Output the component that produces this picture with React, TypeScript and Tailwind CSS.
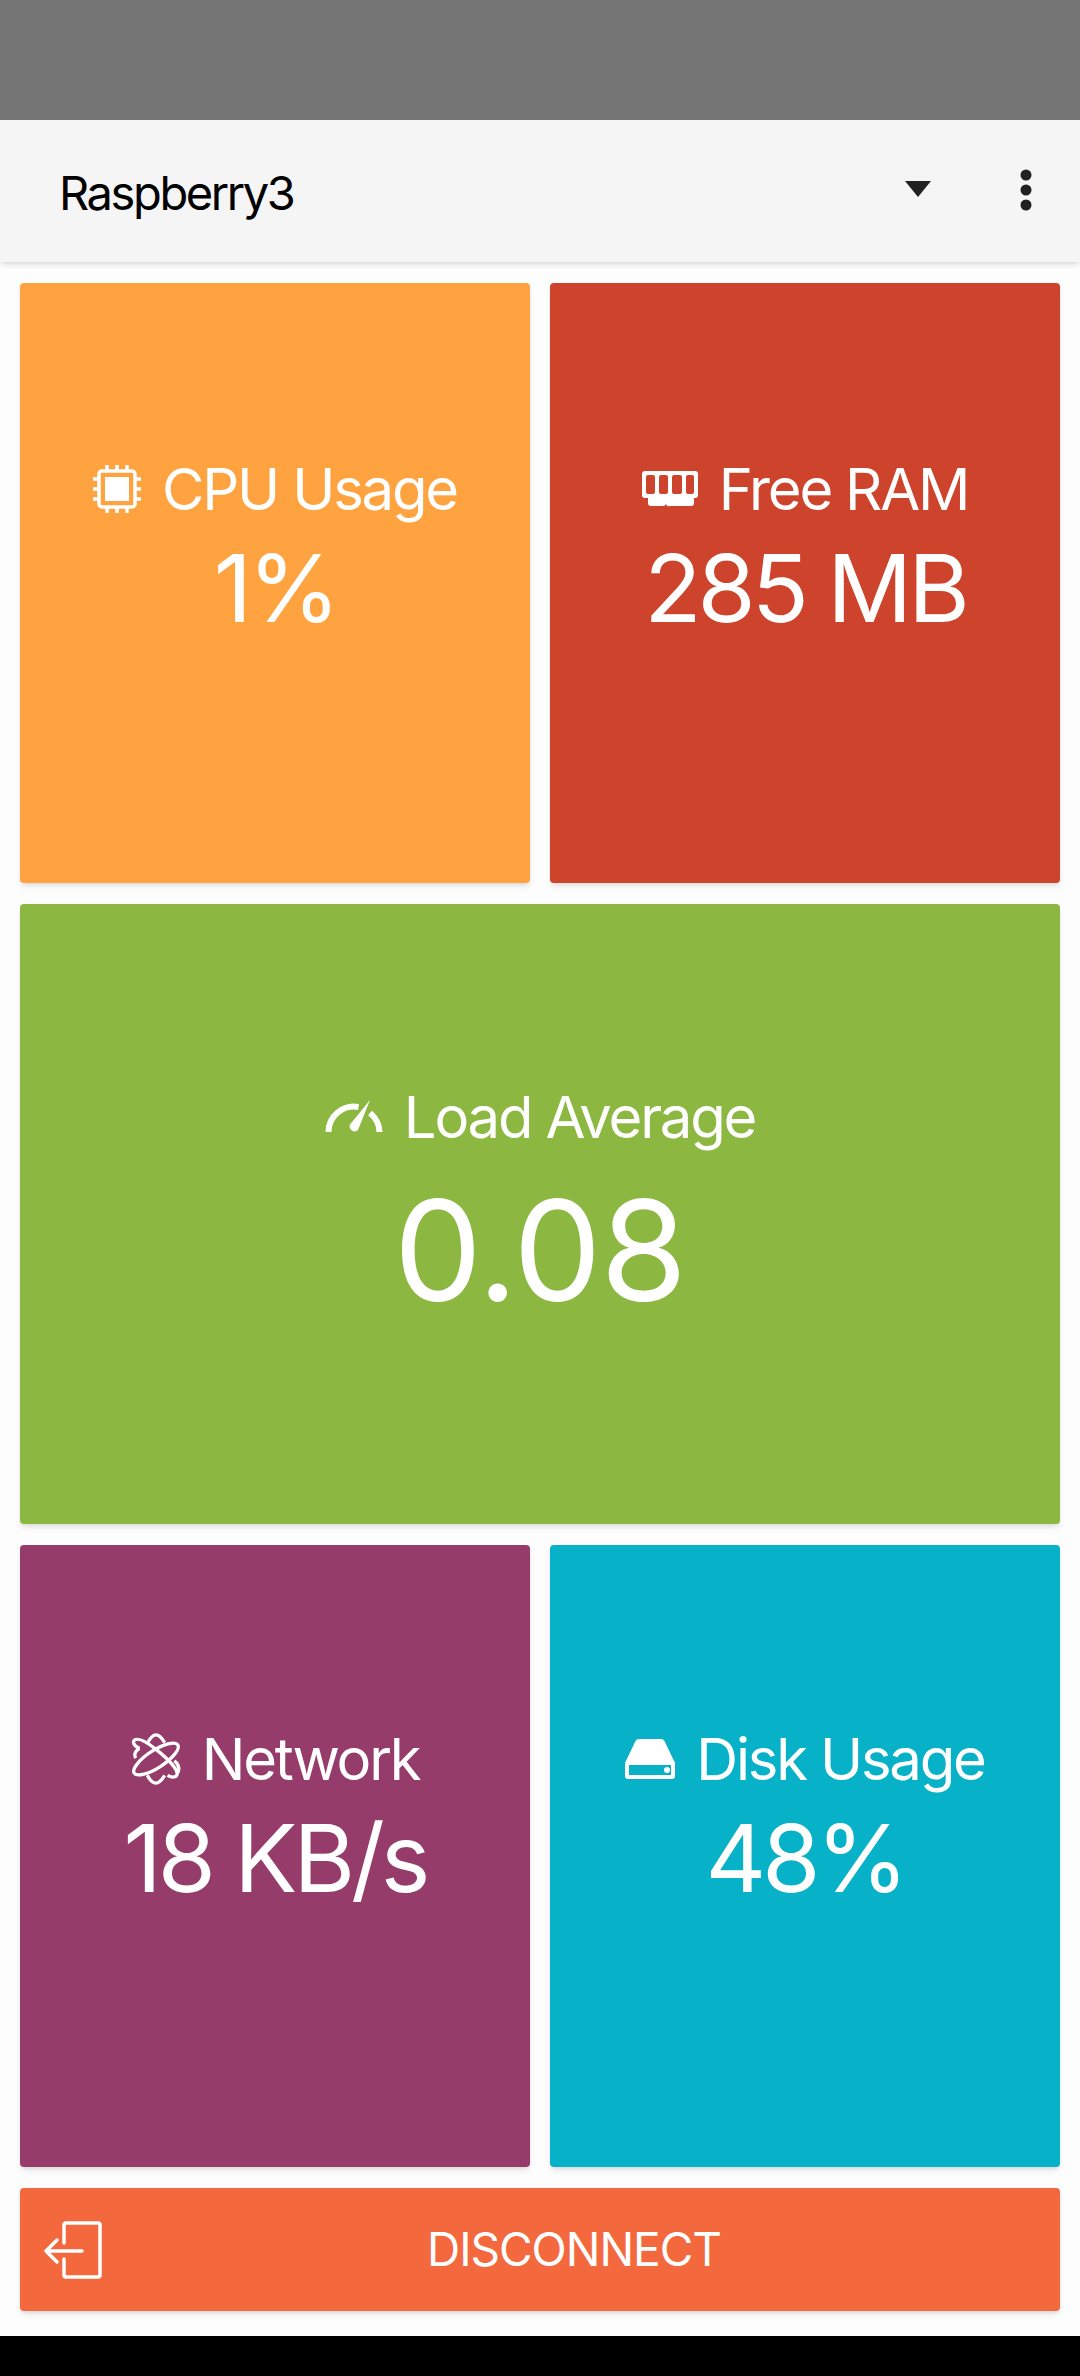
import type { ReactNode } from "react";

function CpuIcon() {
  return (
    <svg viewBox="0 0 48 48" className="w-[48px] h-[48px]" fill="none" stroke="#fff">
      <rect x="6" y="6" width="36" height="36" rx="3" strokeWidth="3.5" />
      <rect x="12" y="12" width="24" height="24" fill="#fff" stroke="none" />
      <path d="M14 0v5M24 0v5M34 0v5M14 43v5M24 43v5M34 43v5M0 14h5M0 24h5M0 34h5M43 14h5M43 24h5M43 34h5" strokeWidth="3.5" />
    </svg>
  );
}

function RamIcon() {
  return (
    <svg viewBox="0 0 56 36" className="w-[56px] h-[36px]" fill="#fff">
      <path
        fillRule="evenodd"
        d="M3 0h50a3 3 0 0 1 3 3v20a3 3 0 0 1-3 4h-1v5a3 3 0 0 1-3 3H28a3 3 0 0 1-4-2 3 3 0 0 1-3 2H9a3 3 0 0 1-3-3v-5H3a3 3 0 0 1-3-4V3a3 3 0 0 1 3-3zM4 6v15a2 2 0 0 0 2 2h5a2 2 0 0 0 2-2V6a2 2 0 0 0-2-2H6a2 2 0 0 0-2 2zm13 0v15a2 2 0 0 0 2 2h5a2 2 0 0 0 2-2V6a2 2 0 0 0-2-2h-5a2 2 0 0 0-2 2zm13 0v15a2 2 0 0 0 2 2h6a2 2 0 0 0 2-2V6a2 2 0 0 0-2-2h-6a2 2 0 0 0-2 2zm14 0v15a2 2 0 0 0 2 2h4a2 2 0 0 0 2-2V6a2 2 0 0 0-2-2h-4a2 2 0 0 0-2 2z"
      />
    </svg>
  );
}

function GaugeIcon() {
  return (
    <svg viewBox="0 0 58 34" className="w-[58px] h-[34px]" fill="none" stroke="#fff">
      <path d="M3.500 32a25.500 25.500 0 0 1 30-25" strokeWidth="6" />
      <path d="M45 13a25.500 25.500 0 0 1 9.500 19" strokeWidth="6" />
      <path d="M45 0 33 30a5 5 0 0 1-8-5.500z" fill="#fff" stroke="none" />
    </svg>
  );
}

function AtomIcon() {
  return (
    <svg viewBox="0 0 52 54" className="w-[50px] h-[52px]" fill="none" stroke="#fff" strokeWidth="3.400">
      <ellipse cx="26" cy="27" rx="27" ry="9" transform="rotate(-33 26 27)" />
      <path d="M9 16C3 14 1 9 4 7c4-2 12 2 22 10s21 18 22 25c0 4-5 5-10 2" />
      <path d="M9 16c-5 2-6 7-4 10M48 42c3-3 2-10-3-13" />
      <path d="M17 11c3-6 6-9 9-9s6 3 9 8" />
      <path d="M17 44c3 6 6 8 9 8s6-3 9-8" />
    </svg>
  );
}

function DiskIcon() {
  return (
    <svg viewBox="0 0 50 40" className="w-[50px] h-[40px]" fill="#fff">
      <path d="M14 0h22a4 4 0 0 1 3.500 2L50 24H0L10.500 2A4 4 0 0 1 14 0z" />
      <path
        fillRule="evenodd"
        d="M3 22h44a3 3 0 0 1 3 3v12a3 3 0 0 1-3 3H3a3 3 0 0 1-3-3V25a3 3 0 0 1 3-3zm1 4v10h42V26zm35 5a3 3 0 1 0 6 0 3 3 0 0 0-6 0z"
      />
    </svg>
  );
}

function ExitIcon() {
  return (
    <svg viewBox="0 0 58 58" className="w-[58px] h-[58px]" fill="none" stroke="#fff" strokeWidth="3.500" strokeLinecap="round" strokeLinejoin="round">
      <path d="M20 22V4a2 2 0 0 1 2-2h32a2 2 0 0 1 2 2v50a2 2 0 0 1-2 2H22a2 2 0 0 1-2-2V38" />
      <path d="M38 30H2M13 19 2 30l11 11" />
    </svg>
  );
}

function Tile({
  color,
  icon,
  title,
  value,
  valueClass,
}: {
  color: string;
  icon: ReactNode;
  title: string;
  value: string;
  valueClass: string;
}) {
  return (
    <div className={`flex-1 min-w-0 h-full rounded-[4px] shadow-md flex flex-col items-center justify-center text-white ${color}`}>
      <div className="flex items-center gap-[21px]">
        {icon}
        <span className="text-[58px] leading-[64px] tracking-[-2.200px]">{title}</span>
      </div>
      <span className={valueClass}>{value}</span>
    </div>
  );
}

const smallValue = "text-[94px] leading-[110px] mt-[12px] tracking-[-4px]";

export default function App() {
  return (
    <div className="w-[1080px] h-[2376px] flex flex-col bg-[#fdfdfd] font-['Inter',sans-serif] overflow-hidden">
      <div className="h-[120px] bg-[#757575] shrink-0" />
      <header className="h-[142px] shrink-0 bg-[#f5f5f5] shadow-md relative flex items-center pl-[59px] pr-[48px]">
        <span className="text-[47px] mt-[4px] tracking-[-2.400px] text-black flex-1">Raspberry3</span>
        <svg viewBox="0 0 26 16" className="w-[26px] h-[16px] mr-[89px] mt-[-4px]" fill="#212121">
          <path d="M0 0h26L13 16z" />
        </svg>
        <svg viewBox="0 0 12 42" className="w-[12px] h-[42px] mt-[-2px]" fill="#212121">
          <circle cx="6" cy="6" r="5.500" />
          <circle cx="6" cy="21" r="5.500" />
          <circle cx="6" cy="36" r="5.500" />
        </svg>
      </header>
      <main className="flex-1 flex flex-col gap-[21px] px-[20px] pt-[21px] pb-[25px]">
        <div className="h-[600px] flex gap-[20px] [&>div]:pb-[66px]">
          <Tile color="bg-[#ffa340]" icon={<CpuIcon />} title="CPU Usage" value="1%" valueClass={smallValue} />
          <Tile color="bg-[#cd432b]" icon={<RamIcon />} title="Free RAM" value="285 MB" valueClass={smallValue} />
        </div>
        <div className="h-[620px] flex [&>div]:pb-[18px]">
          <Tile
            color="bg-[#8cb740]"
            icon={<GaugeIcon />}
            title="Load Average"
            value="0.08"
            valueClass="text-[140px] leading-[150px] mt-[26px] tracking-[-1px]"
          />
        </div>
        <div className="h-[622px] flex gap-[20px] [&>div]:pb-[72px]">
          <Tile color="bg-[#963c6b]" icon={<AtomIcon />} title="Network" value="18 KB/s" valueClass={smallValue} />
          <Tile color="bg-[#07b1c7]" icon={<DiskIcon />} title="Disk Usage" value="48%" valueClass={smallValue} />
        </div>
        <button className="h-[123px] rounded-[4px] shadow-md bg-[#f4683d] text-white flex items-center pl-[24px]">
          <ExitIcon />
          <span className="flex-1 text-center text-[46px] tracking-[-1px] mr-[14px]">DISCONNECT</span>
        </button>
      </main>
      <div className="h-[41px] bg-black shrink-0" />
    </div>
  );
}
